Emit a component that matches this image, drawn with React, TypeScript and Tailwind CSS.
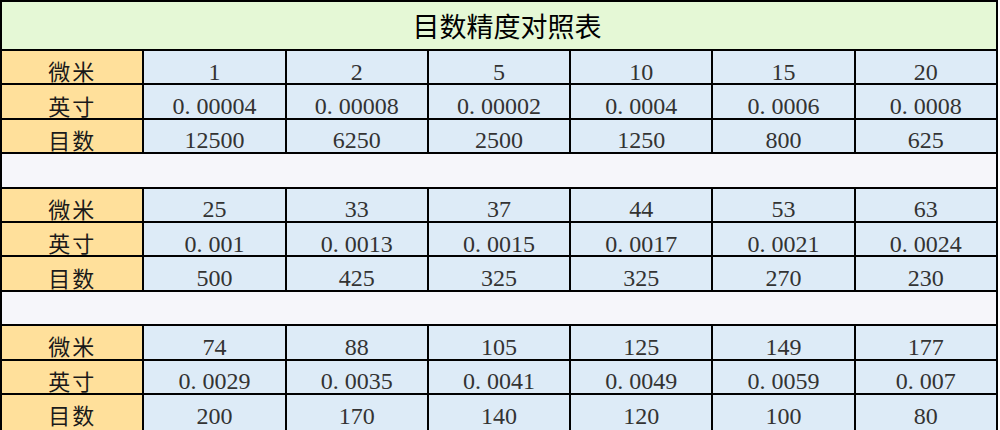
import type { ReactNode } from "react";

type Block = { um: string[]; inch: string[]; mesh: string[] };

const BLOCKS: Block[] = [
  {
    um: ["1", "2", "5", "10", "15", "20"],
    inch: ["0.00004", "0.00008", "0.00002", "0.0004", "0.0006", "0.0008"],
    mesh: ["12500", "6250", "2500", "1250", "800", "625"],
  },
  {
    um: ["25", "33", "37", "44", "53", "63"],
    inch: ["0.001", "0.0013", "0.0015", "0.0017", "0.0021", "0.0024"],
    mesh: ["500", "425", "325", "325", "270", "230"],
  },
  {
    um: ["74", "88", "105", "125", "149", "177"],
    inch: ["0.0029", "0.0035", "0.0041", "0.0049", "0.0059", "0.007"],
    mesh: ["200", "170", "140", "120", "100", "80"],
  },
];

const cjk = "font-['Noto_Sans_CJK_SC',sans-serif]";
const serif = "font-['Liberation_Serif','Noto_Sans_CJK_SC',serif]";

function Num({ value }: { value: string }) {
  const [int, frac] = value.split(".");
  if (frac === undefined) return <>{value}</>;
  return (
    <>
      {int}
      <span className="inline-block w-[0.5em] text-left">.</span>
      {frac}
    </>
  );
}

function Label({ children, tall }: { children: ReactNode; tall?: boolean }) {
  return (
    <div
      className={`${tall ? "h-[35px] pt-[3.4px]" : "h-[32.4px] pt-[6px]"} flex items-center justify-center bg-[#ffe09b] text-[22px] leading-none tracking-[2px] text-[#1a1a1a] ${cjk}`}
    >
      {children}
    </div>
  );
}

function Cell({ value, tall }: { value: string; tall?: boolean }) {
  return (
    <div
      className={`${tall ? "h-[35px] pt-[6.4px]" : "h-[32.4px] pt-[9px]"} flex items-center justify-center bg-[#ddebf7] text-[24px] leading-none text-[#333] ${serif}`}
    >
      <Num value={value} />
    </div>
  );
}

function Row({
  label,
  values,
  tall,
}: {
  label: string;
  values: string[];
  tall?: boolean;
}) {
  return (
    <>
      <Label tall={tall}>{label}</Label>
      {values.map((v, i) => (
        <Cell key={i} value={v} tall={tall} />
      ))}
    </>
  );
}

function BlockRows({ block, last }: { block: Block; last: boolean }) {
  return (
    <>
      <Row label="微米" values={block.um} />
      <Row label="英寸" values={block.inch} />
      <Row label="目数" values={block.mesh} tall={last} />
      {!last && <div className="col-span-7 h-[32.4px] bg-[#f6f6fa]" />}
    </>
  );
}

export default function App() {
  return (
    <div className="w-[1000px] h-[430px] bg-white overflow-hidden">
      <div className="w-[998px] grid grid-cols-7 gap-[2px] bg-black p-[2px] pb-0">
        <div
          className={`col-span-7 h-[47px] flex items-center justify-center bg-[#e5f8d6] pl-[16px] text-[27px] leading-none text-black ${cjk}`}
        >
          目数精度对照表
        </div>
        {BLOCKS.map((b, i) => (
          <BlockRows key={i} block={b} last={i === BLOCKS.length - 1} />
        ))}
      </div>
    </div>
  );
}
